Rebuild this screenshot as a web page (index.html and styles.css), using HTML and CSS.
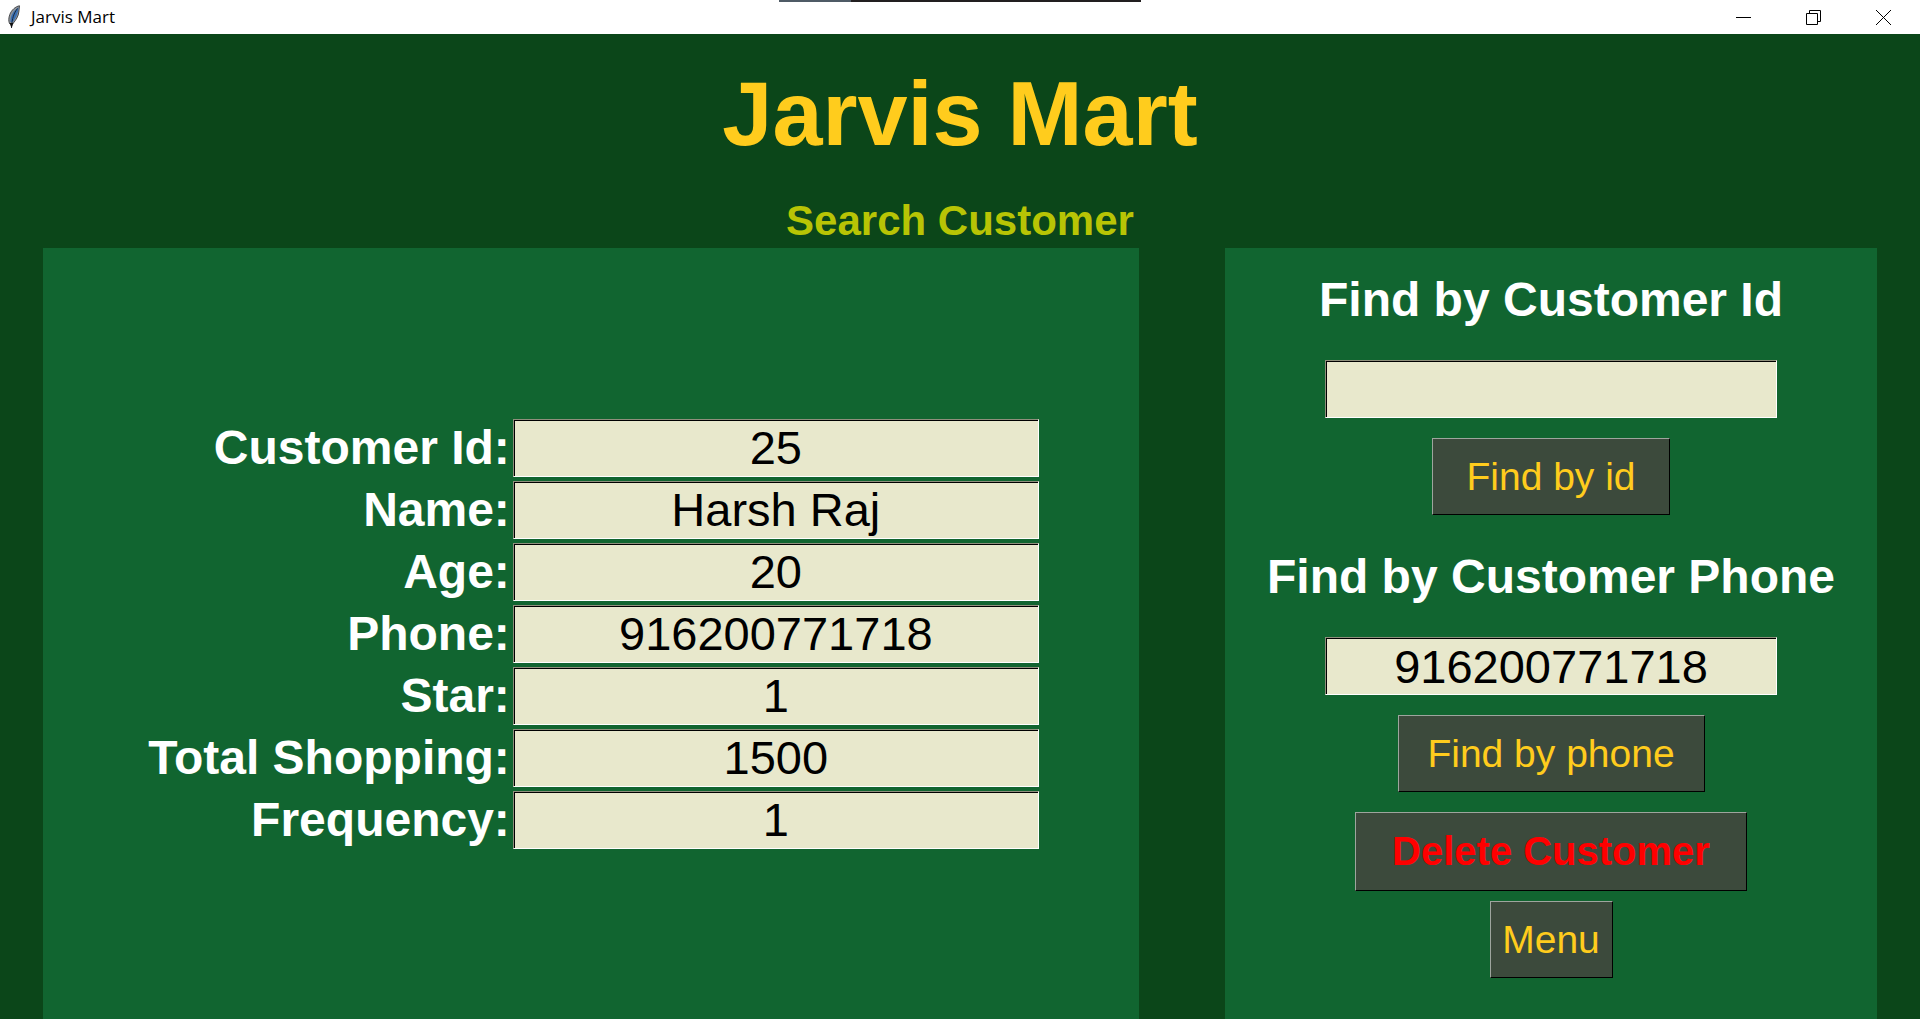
FILE: index.html
```html
<!DOCTYPE html>
<html lang="en">
<head>
  <meta charset="utf-8">
  <meta name="viewport" content="width=device-width, initial-scale=1">
  <title>Jarvis Mart</title>
  <link rel="stylesheet" href="styles.css">
</head>
<body>
  <div class="window">
    <header class="titlebar">
      <svg class="feather" width="14" height="24" viewBox="0 0 14 24" aria-hidden="true">
        <path d="M12.500 .8C8.500 1.500 4.500 5 2.800 9.500C1.600 13 1.400 16 2.500 18.500L6 18.500C9 15 11.500 11 11.800 7Z" fill="#8d9298" stroke="#4a4c50" stroke-width="1"/>
        <path d="M11.500 2.500C11.300 8 9 13 5.500 17.500L3.500 17C3 11 6.500 5.500 11.500 2.500Z" fill="#3a70b4"/>
        <path d="M10.500 3.500C7 8 5 13 4.500 23" fill="none" stroke="#1d2a3c" stroke-width="1"/>
        <path d="M2.500 18H6.500L4.500 23Z" fill="#111"/>
      </svg>
      <span class="titlebar-name">Jarvis Mart</span>
      <div class="window-controls">
        <button type="button" class="window-button" aria-label="Minimize">
          <svg width="15" height="15" viewBox="0 0 15 15"><path d="M0 7.500H15" stroke="#000"/></svg>
        </button>
        <button type="button" class="window-button" aria-label="Restore">
          <svg width="15" height="15" viewBox="0 0 15 15" fill="none" stroke="#000"><path d="M.5 3.500H11.500V14.500H.5ZM3.500 3.500V.5H14.500V11.500H11.500"/></svg>
        </button>
        <button type="button" class="window-button" aria-label="Close">
          <svg width="15" height="15" viewBox="0 0 15 15"><path d="M0 0L15 15M15 0L0 15" stroke="#000"/></svg>
        </button>
      </div>
      <div class="top-strip"></div>
    </header>

    <h1 class="store-name">Jarvis Mart</h1>
    <h2 class="page-name">Search Customer</h2>

    <main class="panels">
      <section class="panel details">
        <label class="label" for="customer-id">Customer Id:</label>
        <input class="field" id="customer-id" type="text" value="25">
        <label class="label" for="name">Name:</label>
        <input class="field" id="name" type="text" value="Harsh Raj">
        <label class="label" for="age">Age:</label>
        <input class="field" id="age" type="text" value="20">
        <label class="label" for="phone">Phone:</label>
        <input class="field" id="phone" type="text" value="916200771718">
        <label class="label" for="star">Star:</label>
        <input class="field" id="star" type="text" value="1">
        <label class="label" for="total">Total Shopping:</label>
        <input class="field" id="total" type="text" value="1500">
        <label class="label" for="frequency">Frequency:</label>
        <input class="field" id="frequency" type="text" value="1">
      </section>

      <section class="panel search">
        <form class="finder">
          <label class="label finder-label" for="find-id">Find by Customer Id</label>
          <input class="field" id="find-id" type="text">
          <button type="button" class="action find-id">Find by id</button>
        </form>
        <form class="finder">
          <label class="label finder-label" for="find-phone">Find by Customer Phone</label>
          <input class="field" id="find-phone" type="text" value="916200771718">
          <button type="button" class="action find-phone">Find by phone</button>
        </form>
        <div class="more-actions">
          <button type="button" class="action delete">Delete Customer</button>
          <button type="button" class="action menu">Menu</button>
        </div>
      </section>
    </main>
  </div>
</body>
</html>
```
FILE: styles.css
```css
* {
  box-sizing: border-box;
}

body {
  margin: 0;
  background: #0b4619;
  font-family: "Liberation Sans", Arial, sans-serif;
}

.window {
  display: flex;
  flex-direction: column;
  min-height: 100vh;
}

/* Title bar */

.titlebar {
  position: relative;
  display: flex;
  align-items: center;
  height: 34px;
  padding: 0 2px 0 7px;
  background: #fff;
  color: #000;
}

.feather {
  margin-right: 10px;
}

.titlebar-name {
  font: 17px/34px "Open Sans", "Noto Sans", sans-serif;
}

.window-controls {
  display: flex;
  align-self: stretch;
  margin-left: auto;
}

.window-button {
  display: flex;
  align-items: center;
  justify-content: center;
  width: 70px;
  padding: 0;
  border: 0;
  background: none;
}

.top-strip {
  position: absolute;
  top: 0;
  left: 50%;
  width: 362px;
  height: 2px;
  margin-left: -181px;
  background: linear-gradient(to right, #4f5b66 72px, #221f20 72px);
}

/* Headings */

.store-name,
.page-name {
  margin: 0;
  text-align: center;
  font-weight: bold;
}

.store-name {
  color: #ffcc1d;
  font-size: 90px;
  line-height: 160px;
}

.page-name {
  color: #b8c405;
  font-size: 42px;
  line-height: 54px;
}

/* Panels */

.panels {
  flex: 1;
  display: grid;
  grid-template-columns: 1096fr 652fr;
  gap: 86px;
  padding: 0 43px;
}

.panel {
  background: #116530;
}

.label {
  color: #fff;
  font-size: 48px;
  font-weight: bold;
  line-height: 56px;
  white-space: nowrap;
}

.field {
  width: 100%;
  height: 58px;
  padding: 0 4px;
  border: 1px solid;
  border-color: #8f8f7c #fff #fff #8f8f7c;
  border-radius: 0;
  outline: 0;
  background: #e8e8cc;
  box-shadow: inset 1px 1px 0 #000;
  color: #000;
  font: 47px "Liberation Sans", Arial, sans-serif;
  text-align: center;
}

.details {
  display: grid;
  grid-template-columns: max-content minmax(0, 526px);
  gap: 4px 3px;
  place-content: center;
  align-items: center;
  padding-left: 5px;
}

.details .label {
  text-align: right;
}

.search {
  display: flex;
  flex-direction: column;
  gap: 34px;
  padding: 24px 0;
}

.finder {
  display: flex;
  flex-direction: column;
  align-items: center;
  gap: 20px;
}

.finder-label {
  margin-bottom: 12px;
}

.finder .field {
  max-width: 452px;
}

.more-actions {
  display: flex;
  flex-direction: column;
  align-items: center;
  gap: 10px;
  margin-top: -14px;
}

.action {
  height: 77px;
  padding: 0;
  border: 1px solid;
  border-color: #9ea59e #000 #000 #9ea59e;
  background: #3c4a3c;
  color: #ffcc1d;
  font: 39px "Liberation Sans", Arial, sans-serif;
}

.find-id {
  width: 238px;
}

.find-phone {
  width: 307px;
}

.delete {
  width: 392px;
  height: 79px;
  color: #f00;
  font-size: 40px;
  font-weight: bold;
}

.menu {
  width: 123px;
}
```
